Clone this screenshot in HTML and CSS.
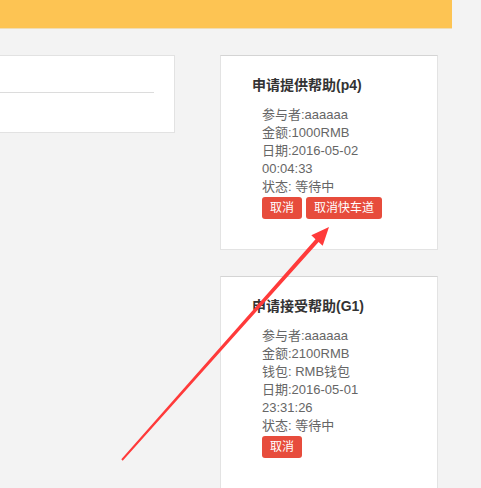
FILE: index.html
```html
<!DOCTYPE html>
<html lang="zh-CN">
<head>
    <meta charset="UTF-8">
    <meta name="viewport" content="width=device-width, initial-scale=1.0">
    <title>帮助列表</title>
    <link rel="stylesheet" href="styles.css">
</head>
<body>
    <div class="topbar"></div>
    <div class="main">
        <div class="left-col">
            <div class="panel">
                <div class="panel-line"></div>
            </div>
        </div>
        <div class="right-col">
            <div class="card">
                <h3 class="card-title">申请提供帮助(p4)</h3>
                <div class="card-body">
                    <p>参与者:aaaaaa</p>
                    <p>金额:1000RMB</p>
                    <p>日期:2016-05-02<br>00:04:33</p>
                    <p>状态: 等待中</p>
                    <div class="actions">
                        <button type="button" class="btn-red">取消</button>
                        <button type="button" class="btn-red">取消快车道</button>
                    </div>
                </div>
            </div>
            <div class="card card-last">
                <h3 class="card-title">申请接受帮助(G1)</h3>
                <div class="card-body">
                    <p>参与者:aaaaaa</p>
                    <p>金额:2100RMB</p>
                    <p>钱包: RMB钱包</p>
                    <p>日期:2016-05-01<br>23:31:26</p>
                    <p>状态: 等待中</p>
                    <div class="actions">
                        <button type="button" class="btn-red">取消</button>
                    </div>
                </div>
            </div>
        </div>
    </div>
    <!-- annotation arrow drawn over the page -->
    <svg class="arrow" width="481" height="488" viewBox="0 0 481 488">
        <polygon points="121.3,459.3 315.5,239.2 311.3,235.3 329,227 322.7,245.7 318.6,241.9 122.7,460.7" fill="#ff3a3a"/>
    </svg>
</body>
</html>
```
FILE: styles.css
```css
body {
    margin: 0;
    background-color: #f3f3f3;
    font-family: "Liberation Sans", "Noto Sans CJK SC", sans-serif;
    overflow: hidden;
    height: 488px;
}
.topbar {
    width: 452px;
    height: 29px;
    background-color: #fdc453;
    border-bottom: 1px solid #f0ddb5;
    box-sizing: border-box;
}
.main {
    display: flex;
    align-items: flex-start;
}
.left-col {
    width: 175px;
    padding-top: 26px;
}
.panel {
    height: 78px;
    background-color: #fff;
    border: 1px solid #e2e2e2;
    border-left: none;
    box-sizing: border-box;
    padding-top: 36px;
}
.panel-line {
    width: 154px;
    height: 1px;
    background-color: #dcdcdc;
}
.right-col {
    margin-left: 45px;
    width: 218px;
    padding-top: 26px;
    display: flex;
    flex-direction: column;
    gap: 26px;
}
.card {
    background-color: #fff;
    border: 1px solid #e3e3e3;
    border-top-color: #d4d4d4;
    padding: 19px 10px 30px 31px;
}
.card-last {
    border-bottom: none;
}
.card-title {
    margin: 0 0 11px;
    font-size: 14px;
    line-height: 20px;
    font-weight: bold;
    color: #333;
}
.card-body {
    padding-left: 10px;
    font-size: 13px;
    line-height: 18px;
    color: #666;
}
.card-body p {
    margin: 0;
}
.actions {
    display: flex;
    gap: 4px;
    margin-top: 1px;
}
.btn-red {
    height: 22px;
    padding: 0 8px;
    border: none;
    border-radius: 3px;
    background-color: #e74c3c;
    color: #fff;
    font-family: "Liberation Sans", "Noto Sans CJK SC", sans-serif;
    font-size: 12px;
    line-height: 22px;
}
.arrow {
    position: absolute;
    left: 0;
    top: 0;
    pointer-events: none;
}
```
